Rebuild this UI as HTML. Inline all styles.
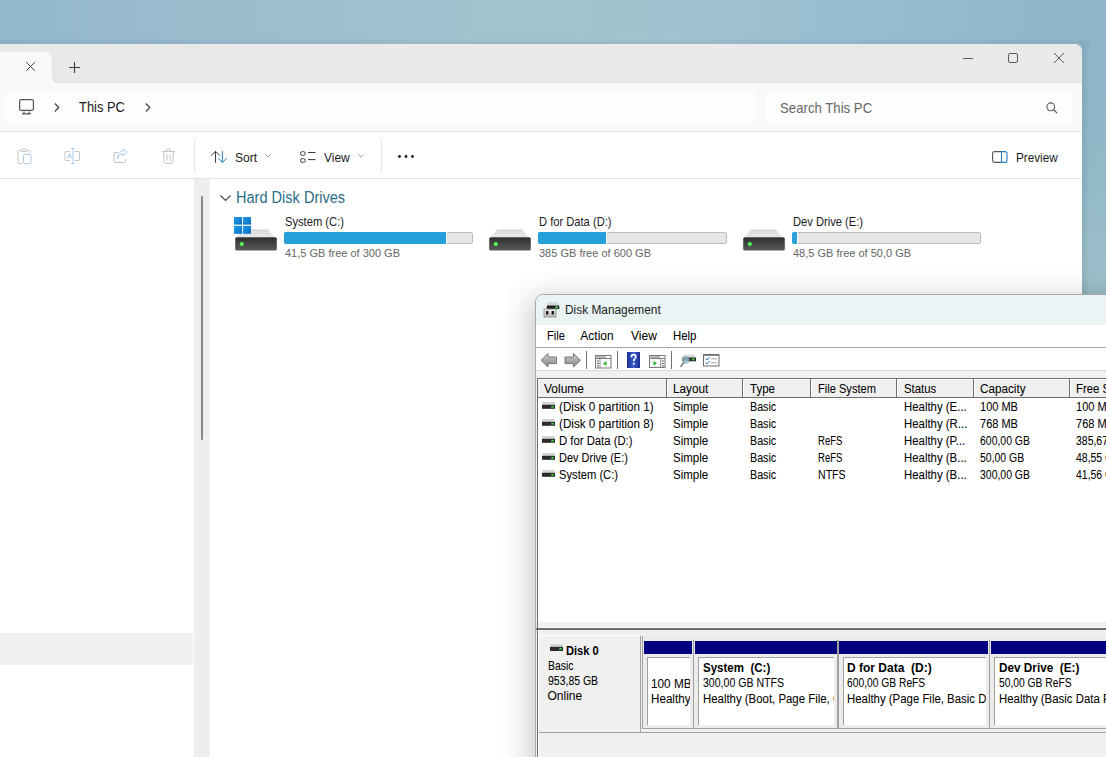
<!DOCTYPE html>
<html><head><meta charset="utf-8">
<style>
*{box-sizing:border-box;margin:0;padding:0}
html,body{width:1106px;height:757px;overflow:hidden}
body{position:relative;font-family:"Liberation Sans",sans-serif;background:linear-gradient(90deg,#93b8ca 0%,#9bbfce 25%,#a2c4cf 45%,#a0c3cf 62%,#96bccf 80%,#8fb5c9 100%);}
.a{position:absolute}
.t{position:absolute;white-space:pre;line-height:1;transform-origin:0 0}
svg{position:absolute;overflow:visible}
#exp{left:-20px;top:44px;width:1102px;height:720px;background:#fff;border-top-right-radius:8px;overflow:hidden}
.dmt{font-size:12px;color:#000;-webkit-text-stroke:0.05px #000}
</style></head><body>

<div class="a" style="left:0;top:38px;width:1090px;height:6px;background:linear-gradient(180deg,rgba(60,90,100,0),rgba(60,90,100,.12))"></div>
<div class="a" style="left:1082px;top:44px;width:24px;height:256px;background:linear-gradient(180deg,#8fb5c9 0%,#93b8c7 50%,#9dc1cb 100%)"></div>
<div class="a" style="left:1082px;top:44px;width:8px;height:260px;background:linear-gradient(90deg,rgba(60,90,100,.14),rgba(60,90,100,0))"></div>
<!-- EXPLORER -->
<div id="exp" class="a"></div>
<!-- tab row -->
<div class="a" style="left:0;top:44px;width:1082px;height:38px;background:#e9e9e9;border-top-right-radius:8px"></div>
<div class="a" style="left:0;top:52px;width:52px;height:31px;background:#f9f9f9;border-top-right-radius:8px"></div>
<div class="a" style="left:52px;top:75px;width:8px;height:8px;background:#f9f9f9"></div>
<div class="a" style="left:52px;top:60px;width:1030px;height:23px;background:#e9e9e9;border-bottom-left-radius:6px;border-bottom:1px solid #dfdfdf;border-left:1px solid #e2e2e2"></div>
<svg style="left:26px;top:62px" width="9" height="9"><path d="M0.3 0.3L8.7 8.7M8.7 0.3L0.3 8.7" stroke="#3a3a3a" stroke-width="1"/></svg>
<svg style="left:69px;top:62px" width="11" height="11"><path d="M5.5 0V11M0 5.5H11" stroke="#3a3a3a" stroke-width="1.1"/></svg>
<!-- window controls -->
<svg style="left:963px;top:58px" width="10" height="1"><path d="M0 0.5H10" stroke="#5a5a5a" stroke-width="1"/></svg>
<svg style="left:1008px;top:53px" width="10" height="10"><rect x="0.5" y="0.5" width="9" height="9" rx="1.5" fill="none" stroke="#5a5a5a" stroke-width="1"/></svg>
<svg style="left:1054px;top:53px" width="10" height="10"><path d="M0 0L10 10M10 0L0 10" stroke="#5a5a5a" stroke-width="1"/></svg>

<!-- address row -->
<div class="a" style="left:0;top:83px;width:1082px;height:48.5px;background:#f9f9f9;border-bottom:1px solid #e1e1e1"></div>
<div class="a" style="left:5px;top:90px;width:751px;height:34px;background:#fdfdfd;border-radius:4px"></div>
<svg style="left:19px;top:99px" width="15" height="16"><rect x="0.6" y="0.6" width="13.8" height="10.8" rx="1.5" fill="none" stroke="#555" stroke-width="1.2"/><path d="M5 12.5V14.5M10 12.5V14.5M3 14.8H12" stroke="#555" stroke-width="1.2"/></svg>
<svg style="left:54px;top:103px" width="6" height="9"><path d="M0.8 0.5L4.8 4.5L0.8 8.5" fill="none" stroke="#3a3a3a" stroke-width="1.1"/></svg>
<div class="t" style="left:79.4px;top:100.1px;font-size:14.8px;color:#1b1b1b;transform:scaleX(0.872)">This PC</div>
<svg style="left:145px;top:103px" width="6" height="9"><path d="M0.8 0.5L4.8 4.5L0.8 8.5" fill="none" stroke="#3a3a3a" stroke-width="1.1"/></svg>
<div class="a" style="left:766px;top:91px;width:305px;height:33px;background:#fdfdfd;border-radius:4px"></div>
<div class="t" style="left:780px;top:99.9px;font-size:15px;color:#666;transform:scaleX(0.88)">Search This PC</div>
<svg style="left:1046px;top:102px" width="12" height="12"><circle cx="4.8" cy="4.8" r="3.9" fill="none" stroke="#5a5a5a" stroke-width="1.1"/><path d="M7.6 7.6L11 11" stroke="#5a5a5a" stroke-width="1.2"/></svg>

<!-- toolbar -->
<div class="a" style="left:0;top:131.5px;width:1082px;height:47.5px;background:#fff;border-bottom:1px solid #e1e1e1"></div>
<!-- disabled icons -->
<svg style="left:17px;top:148px" width="15" height="16"><path d="M3.5 2.5H2.2C1.5 2.5 1 3 1 3.7V14.3C1 15 1.5 15.5 2.2 15.5H5" fill="none" stroke="#c4c4c4" stroke-width="1"/><rect x="4" y="1" width="6" height="2.5" rx="1" fill="none" stroke="#c4c4c4" stroke-width="1"/><path d="M10.5 2.5H11.8C12.5 2.5 13 3 13 3.7V5.5" fill="none" stroke="#c4c4c4" stroke-width="1"/><rect x="6.5" y="6.5" width="7.5" height="9" rx="1.2" fill="none" stroke="#a9cdea" stroke-width="1"/></svg>
<svg style="left:64px;top:148px" width="17" height="16"><path d="M6 3.5H2C1.4 3.5 1 3.9 1 4.5V11.5C1 12.1 1.4 12.5 2 12.5H6M10.5 3.5H14.5C15.1 3.5 15.5 3.9 15.5 4.5V11.5C15.5 12.1 15.1 12.5 14.5 12.5H10.5" fill="none" stroke="#c4c4c4" stroke-width="1"/><path d="M3.5 10.5L5.5 5L7.5 10.5M4.2 8.7H6.8" fill="none" stroke="#a9cdea" stroke-width="1"/><path d="M9 0.5V15.5M7.2 0.5H10.8M7.2 15.5H10.8" fill="none" stroke="#a9cdea" stroke-width="1"/></svg>
<svg style="left:113px;top:148px" width="15" height="16"><path d="M5 4.5H2C1.4 4.5 1 4.9 1 5.5V13.5C1 14.1 1.4 14.5 2 14.5H11.5C12.1 14.5 12.5 14.1 12.5 13.5V11.5" fill="none" stroke="#c4c4c4" stroke-width="1"/><path d="M4.5 11C5 7.5 7.5 5.8 10 5.8V8L14 4.2L10 0.8V2.9C6.5 3 4.5 6.5 4.5 11Z" fill="none" stroke="#a9cdea" stroke-width="1"/></svg>
<svg style="left:161px;top:148px" width="15" height="16"><path d="M1 3.5H14M5.5 3.5V2C5.5 1.4 5.9 1 6.5 1H8.5C9.1 1 9.5 1.4 9.5 2V3.5M2.5 3.5L3.3 14C3.4 14.8 3.9 15.3 4.6 15.3H10.4C11.1 15.3 11.6 14.8 11.7 14L12.5 3.5M6 6.5V12.5M9 6.5V12.5" fill="none" stroke="#c4c4c4" stroke-width="1"/></svg>
<div class="a" style="left:194px;top:139px;width:1px;height:33px;background:#e5e5e5"></div>
<!-- sort -->
<svg style="left:211px;top:151px" width="17" height="13"><path d="M4.5 11.8V0.3M0.2 4.6L4.5 0.3L8.8 4.6" fill="none" stroke="#3a3a3a" stroke-width="1"/><path d="M11.4 0V11.5M7.1 7.2L11.4 11.5L15.7 7.2" fill="none" stroke="#2a7ec4" stroke-width="1"/></svg>
<div class="t" style="left:235.4px;top:150.8px;font-size:13.3px;color:#1b1b1b;transform:scaleX(0.91)">Sort</div>
<svg style="left:265px;top:154px" width="6" height="4"><path d="M0.3 0.3L3 3L5.7 0.3" fill="none" stroke="#9a9a9a" stroke-width="0.9"/></svg>
<!-- view -->
<svg style="left:300px;top:151px" width="17" height="12"><rect x="0.5" y="0.6" width="4.8" height="3.8" rx="1.9" fill="none" stroke="#3a3a3a" stroke-width="1"/><rect x="0.5" y="7.6" width="4.8" height="3.8" rx="1.9" fill="none" stroke="#3a3a3a" stroke-width="1"/><path d="M8 1.5H15.5M8 8.6H15.5" stroke="#3a3a3a" stroke-width="1"/></svg>
<div class="t" style="left:324.3px;top:150.8px;font-size:13.3px;color:#1b1b1b;transform:scaleX(0.9)">View</div>
<svg style="left:358px;top:154px" width="6" height="4"><path d="M0.3 0.3L3 3L5.7 0.3" fill="none" stroke="#9a9a9a" stroke-width="0.9"/></svg>
<div class="a" style="left:381px;top:139px;width:1px;height:33px;background:#e5e5e5"></div>
<svg style="left:398px;top:155px" width="16" height="3"><circle cx="1.5" cy="1.5" r="1.4" fill="#1b1b1b"/><circle cx="8" cy="1.5" r="1.4" fill="#1b1b1b"/><circle cx="14.5" cy="1.5" r="1.4" fill="#1b1b1b"/></svg>
<!-- preview -->
<svg style="left:992px;top:151px" width="16" height="12"><path d="M9.5 0.6H2.5C1.5 0.6 0.6 1.5 0.6 2.5V9.5C0.6 10.5 1.5 11.4 2.5 11.4H9.5" fill="none" stroke="#555" stroke-width="1.1"/><path d="M9.5 0.6H13C14.1 0.6 15 1.5 15 2.6V9.4C15 10.5 14.1 11.4 13 11.4H9.5V0.6Z" fill="none" stroke="#2a7ec4" stroke-width="1.1"/></svg>
<div class="t" style="left:1016.4px;top:150.5px;font-size:13.3px;color:#1b1b1b;transform:scaleX(0.88)">Preview</div>

<!-- content -->
<div class="a" style="left:0;top:633px;width:193px;height:32px;background:#f0f0f0"></div>
<div class="a" style="left:194px;top:179px;width:16px;height:600px;background:#eeeeee"></div>
<div class="a" style="left:201px;top:196px;width:2px;height:244px;background:#858585;border-radius:1px"></div>

<svg style="left:220px;top:195px" width="11" height="6"><path d="M0.5 0.5L5.5 5.5L10.5 0.5" fill="none" stroke="#444" stroke-width="1.1"/></svg>
<div class="t" style="left:235.8px;top:189.7px;font-size:15.6px;color:#2a6d86;transform:scaleX(0.933)">Hard Disk Drives</div>


<svg style="left:234px;top:228px" width="45" height="24"><defs><linearGradient id="tf235" x1="0" y1="0" x2="0" y2="1"><stop offset="0" stop-color="#d9d9d9"/><stop offset="1" stop-color="#e9e9e9"/></linearGradient><linearGradient id="bd235" x1="0" y1="0" x2="0" y2="1"><stop offset="0" stop-color="#2e2e2e"/><stop offset="1" stop-color="#5a5a5a"/></linearGradient></defs><path d="M9.4 1.3H33.7L40.7 9.3H2.4Z" fill="url(#tf235)"/><rect x="1.2" y="9.3" width="41.6" height="13.2" rx="1.5" fill="url(#bd235)"/><circle cx="7.8" cy="16" r="2.2" fill="#3ddc3d"/><circle cx="7.8" cy="16" r="1.1" fill="#8ff08f"/></svg>
<div class="t" style="left:285px;top:216.3px;font-size:12.4px;color:#1b1b1b;transform:scaleX(0.9)">System (C:)</div>
<div class="a" style="left:284px;top:232.3px;width:189px;height:12.2px;background:#e6e6e6;border:1px solid #bcbcbc;border-radius:2px"></div>
<div class="a" style="left:284px;top:232.3px;width:163px;height:12.2px;background:#26a0da;border-radius:2px 0 0 2px;border-right:1px solid #f4fbff"></div>
<div class="t" style="left:285px;top:247.7px;font-size:11.8px;color:#666;transform:scaleX(0.933)">41,5 GB free of 300 GB</div>
<svg style="left:488px;top:228px" width="45" height="24"><defs><linearGradient id="tf489" x1="0" y1="0" x2="0" y2="1"><stop offset="0" stop-color="#d9d9d9"/><stop offset="1" stop-color="#e9e9e9"/></linearGradient><linearGradient id="bd489" x1="0" y1="0" x2="0" y2="1"><stop offset="0" stop-color="#2e2e2e"/><stop offset="1" stop-color="#5a5a5a"/></linearGradient></defs><path d="M9.4 1.3H33.7L40.7 9.3H2.4Z" fill="url(#tf489)"/><rect x="1.2" y="9.3" width="41.6" height="13.2" rx="1.5" fill="url(#bd489)"/><circle cx="7.8" cy="16" r="2.2" fill="#3ddc3d"/><circle cx="7.8" cy="16" r="1.1" fill="#8ff08f"/></svg>
<div class="t" style="left:539px;top:216.3px;font-size:12.4px;color:#1b1b1b;transform:scaleX(0.9)">D for Data (D:)</div>
<div class="a" style="left:538px;top:232.3px;width:189px;height:12.2px;background:#e6e6e6;border:1px solid #bcbcbc;border-radius:2px"></div>
<div class="a" style="left:538px;top:232.3px;width:69px;height:12.2px;background:#26a0da;border-radius:2px 0 0 2px;border-right:1px solid #f4fbff"></div>
<div class="t" style="left:539px;top:247.7px;font-size:11.8px;color:#666;transform:scaleX(0.933)">385 GB free of 600 GB</div>
<svg style="left:742px;top:228px" width="45" height="24"><defs><linearGradient id="tf743" x1="0" y1="0" x2="0" y2="1"><stop offset="0" stop-color="#d9d9d9"/><stop offset="1" stop-color="#e9e9e9"/></linearGradient><linearGradient id="bd743" x1="0" y1="0" x2="0" y2="1"><stop offset="0" stop-color="#2e2e2e"/><stop offset="1" stop-color="#5a5a5a"/></linearGradient></defs><path d="M9.4 1.3H33.7L40.7 9.3H2.4Z" fill="url(#tf743)"/><rect x="1.2" y="9.3" width="41.6" height="13.2" rx="1.5" fill="url(#bd743)"/><circle cx="7.8" cy="16" r="2.2" fill="#3ddc3d"/><circle cx="7.8" cy="16" r="1.1" fill="#8ff08f"/></svg>
<div class="t" style="left:793px;top:216.3px;font-size:12.4px;color:#1b1b1b;transform:scaleX(0.9)">Dev Drive (E:)</div>
<div class="a" style="left:792px;top:232.3px;width:189px;height:12.2px;background:#e6e6e6;border:1px solid #bcbcbc;border-radius:2px"></div>
<div class="a" style="left:792px;top:232.3px;width:6px;height:12.2px;background:#26a0da;border-radius:2px 0 0 2px;border-right:1px solid #f4fbff"></div>
<div class="t" style="left:793px;top:247.7px;font-size:11.8px;color:#666;transform:scaleX(0.933)">48,5 GB free of 50,0 GB</div>
<svg style="left:234px;top:217px" width="17" height="17"><defs><linearGradient id="wl" x1="0" y1="0" x2="1" y2="1"><stop offset="0" stop-color="#1c9be8"/><stop offset="1" stop-color="#0c6fc6"/></linearGradient></defs><rect x="0" y="0" width="8" height="7.6" fill="url(#wl)"/><rect x="9" y="0" width="8" height="7.6" fill="url(#wl)"/><rect x="0" y="8.8" width="8" height="8" fill="url(#wl)"/><rect x="9" y="8.8" width="8" height="8" fill="url(#wl)"/></svg>
<div class="a" style="left:535px;top:295px;width:700px;height:520px;border-top-left-radius:8px;box-shadow:-4px 4px 30px rgba(0,0,0,0.24)"></div>
<div class="a" style="left:535px;top:294px;width:700px;height:520px;background:#f0f0f0;border:1px solid #a8a8a8;border-top-left-radius:8px;overflow:hidden">
<div class="a" style="left:0;top:0;width:700px;height:30px;background:#eaf4f5"></div>
<div class="a" style="left:0;top:30px;width:700px;height:23px;background:#fff;border-bottom:1px solid #a6a6a6"></div>
<div class="a" style="left:0;top:53px;width:700px;height:22px;background:#fff"></div>
</div>
<svg style="left:543px;top:301px" width="18" height="17"><defs><linearGradient id="tb" x1="0" y1="0" x2="0" y2="1"><stop offset="0" stop-color="#f4f4f4"/><stop offset="1" stop-color="#b9b9b9"/></linearGradient></defs><path d="M5 1.2H15L16 4.6H4Z" fill="#d5d5dc"/><rect x="3.8" y="4.5" width="12.5" height="3.6" rx="0.6" fill="#1f1f1f"/><circle cx="13.6" cy="6.3" r="1.3" fill="#47d447"/><rect x="1" y="8" width="12" height="8" fill="url(#tb)" stroke="#8a8a8a" stroke-width="0.8"/><rect x="3" y="10" width="2.4" height="3.5" fill="#1a1a1a"/><rect x="8.6" y="10" width="2.4" height="3.5" fill="#1a1a1a"/></svg>
<div class="t " style="left:565.3px;top:304px;transform:scaleX(0.99);font-size:12px;color:#1b1b1b">Disk Management</div>
<div class="t dmt" style="left:546.5px;top:329.5px;transform:scaleX(0.92);">File</div>
<div class="t dmt" style="left:580.3px;top:329.5px;transform:scaleX(1.0);">Action</div>
<div class="t dmt" style="left:631px;top:329.5px;transform:scaleX(1.0);">View</div>
<div class="t dmt" style="left:672.5px;top:329.5px;transform:scaleX(0.95);">Help</div>
<svg style="left:540px;top:352.5px" width="18" height="16"><defs><linearGradient id="ar" x1="0" y1="0" x2="0" y2="1"><stop offset="0" stop-color="#d8d8d8"/><stop offset="0.5" stop-color="#a8a8a8"/><stop offset="1" stop-color="#8a8a8a"/></linearGradient></defs><path d="M1 7.3L8 0.6V4H16.5V10.6H8V14Z" fill="url(#ar)" stroke="#777" stroke-width="1" stroke-linejoin="round"/></svg>
<svg style="left:563.5px;top:352.5px" width="18" height="16"><path d="M16.5 7.3L9.5 0.6V4H1V10.6H9.5V14Z" fill="url(#ar)" stroke="#777" stroke-width="1" stroke-linejoin="round"/></svg>
<div class="a" style="left:586px;top:351px;width:1px;height:18px;background:#707070"></div>
<svg style="left:595px;top:354.5px" width="17" height="14"><rect x="0.5" y="0.5" width="15.5" height="12.5" fill="#fafafa" stroke="#7a7a7a" stroke-width="1"/><path d="M0.5 3.5H16" stroke="#7a7a7a"/><rect x="1.5" y="1.3" width="9.5" height="1.4" fill="#9a9a9a"/><path d="M5 4V13" stroke="#9a9a9a"/><path d="M2 6H4M2 8.5H4M2 11H4" stroke="#555" stroke-width="1"/><path d="M11.5 6L8 8.5L11.5 11Z" fill="#2fb52f"/></svg>
<div class="a" style="left:617px;top:351px;width:1px;height:18px;background:#707070"></div>
<svg style="left:627px;top:352px" width="13" height="16"><defs><linearGradient id="hp" x1="0" y1="0" x2="1" y2="0"><stop offset="0" stop-color="#1b2e8f"/><stop offset="0.5" stop-color="#3b5fcf"/><stop offset="1" stop-color="#1b2e8f"/></linearGradient></defs><rect x="0" y="0" width="13" height="16" fill="url(#hp)"/><path d="M4.3 5.2C4.3 3.4 5.3 2.6 6.6 2.6C8 2.6 8.9 3.5 8.9 4.8C8.9 6.6 6.7 6.9 6.7 9.2" fill="none" stroke="#fff" stroke-width="1.6"/><rect x="5.9" y="10.9" width="1.7" height="1.8" fill="#fff"/></svg>
<svg style="left:649px;top:355px" width="17" height="13"><rect x="0.5" y="0.5" width="15.5" height="12" fill="#fafafa" stroke="#7a7a7a" stroke-width="1"/><path d="M0.5 3.5H16" stroke="#7a7a7a"/><rect x="1.5" y="1.3" width="9.5" height="1.4" fill="#9a9a9a"/><path d="M11.5 4V12.5" stroke="#9a9a9a"/><path d="M12.8 6H14.8M12.8 8.5H14.8M12.8 11H14.8" stroke="#555" stroke-width="1"/><path d="M4.5 5.8L8 8.3L4.5 10.8Z" fill="#2fb52f"/></svg>
<div class="a" style="left:671px;top:351px;width:1px;height:18px;background:#707070"></div>
<svg style="left:679.5px;top:354px" width="17" height="14"><path d="M3.5 0.8H14.5L15.5 3.5H2.5Z" fill="#d8d8d8"/><rect x="2.5" y="3.5" width="13.5" height="3.8" fill="#2a2a2a"/><rect x="12" y="4.5" width="2.6" height="1.8" fill="#39d039"/><circle cx="6" cy="6" r="3.2" fill="#a9cde0" fill-opacity="0.75" stroke="#6f8f9f" stroke-width="0.8"/><path d="M3.8 8.4L0.5 13" stroke="#555" stroke-width="1.2"/></svg>
<svg style="left:703px;top:354px" width="17" height="13"><rect x="0.5" y="0.5" width="15.5" height="11.5" fill="#fff" stroke="#6a6a6a" stroke-width="1"/><path d="M0.5 1.5H16" stroke="#8a8a8a" stroke-width="1"/><path d="M2.5 4.5L4 6L6.5 3M2.5 8.5L4 10L6.5 7" fill="none" stroke="#2a7ec4" stroke-width="1"/><path d="M8 4.8H14M8 8.8H14" stroke="#a0a0a0" stroke-width="1"/></svg>
<div class="a" style="left:536px;top:370px;width:600px;height:8px;background:#f0f0f0;border-top:1px solid #dadada"></div>
<div class="a" style="left:537px;top:377.5px;width:600px;height:252px;background:#fff;border-left:1px solid #6e6e6e;border-top:1.5px solid #6e6e6e"></div>
<div class="a" style="left:538px;top:379px;width:600px;height:18.5px;background:#efefef;border-top:1px solid #fff;border-bottom:1.2px solid #6e6e6e"></div>
<div class="a" style="left:665.5px;top:379px;width:1px;height:18px;background:#6e6e6e"></div><div class="a" style="left:666.5px;top:379px;width:1px;height:18px;background:#fff"></div>
<div class="a" style="left:742.0px;top:379px;width:1px;height:18px;background:#6e6e6e"></div><div class="a" style="left:743.0px;top:379px;width:1px;height:18px;background:#fff"></div>
<div class="a" style="left:810.0px;top:379px;width:1px;height:18px;background:#6e6e6e"></div><div class="a" style="left:811.0px;top:379px;width:1px;height:18px;background:#fff"></div>
<div class="a" style="left:896.0px;top:379px;width:1px;height:18px;background:#6e6e6e"></div><div class="a" style="left:897.0px;top:379px;width:1px;height:18px;background:#fff"></div>
<div class="a" style="left:972.8px;top:379px;width:1px;height:18px;background:#6e6e6e"></div><div class="a" style="left:973.8px;top:379px;width:1px;height:18px;background:#fff"></div>
<div class="a" style="left:1069.2px;top:379px;width:1px;height:18px;background:#6e6e6e"></div><div class="a" style="left:1070.2px;top:379px;width:1px;height:18px;background:#fff"></div>
<div class="t dmt" style="left:544px;top:383px;transform:scaleX(1.0);">Volume</div>
<div class="t dmt" style="left:673.3px;top:383px;transform:scaleX(0.98);">Layout</div>
<div class="t dmt" style="left:750px;top:383px;transform:scaleX(0.96);">Type</div>
<div class="t dmt" style="left:817.7px;top:383px;transform:scaleX(0.925);">File System</div>
<div class="t dmt" style="left:903.6px;top:383px;transform:scaleX(0.95);">Status</div>
<div class="t dmt" style="left:980px;top:383px;transform:scaleX(0.976);">Capacity</div>
<div class="t dmt" style="left:1076px;top:383px;transform:scaleX(0.95);">Free S</div>
<svg style="left:541.5px;top:402.3px" width="13" height="7"><rect x="0.3" y="0" width="12.4" height="3" rx="0.6" fill="#d4d4d4"/><rect x="0" y="2.8" width="13" height="4" fill="#2b2b2b"/><rect x="9.3" y="3.9" width="2.4" height="1.8" fill="#3ad63a"/></svg>
<div class="t dmt" style="left:558.5px;top:400.9px;transform:scaleX(0.972);">(Disk 0 partition 1)</div>
<div class="t dmt" style="left:673.3px;top:400.9px;transform:scaleX(0.96);">Simple</div>
<div class="t dmt" style="left:750px;top:400.9px;transform:scaleX(0.894);">Basic</div>
<div class="t dmt" style="left:903.6px;top:400.9px;transform:scaleX(0.95);">Healthy (E...</div>
<div class="t dmt" style="left:980px;top:400.9px;transform:scaleX(0.918);">100 MB</div>
<div class="t dmt" style="left:1076px;top:400.9px;transform:scaleX(0.918);">100 MB</div>
<svg style="left:541.5px;top:419.3px" width="13" height="7"><rect x="0.3" y="0" width="12.4" height="3" rx="0.6" fill="#d4d4d4"/><rect x="0" y="2.8" width="13" height="4" fill="#2b2b2b"/><rect x="9.3" y="3.9" width="2.4" height="1.8" fill="#3ad63a"/></svg>
<div class="t dmt" style="left:558.5px;top:417.9px;transform:scaleX(0.972);">(Disk 0 partition 8)</div>
<div class="t dmt" style="left:673.3px;top:417.9px;transform:scaleX(0.96);">Simple</div>
<div class="t dmt" style="left:750px;top:417.9px;transform:scaleX(0.894);">Basic</div>
<div class="t dmt" style="left:903.6px;top:417.9px;transform:scaleX(0.95);">Healthy (R...</div>
<div class="t dmt" style="left:980px;top:417.9px;transform:scaleX(0.918);">768 MB</div>
<div class="t dmt" style="left:1076px;top:417.9px;transform:scaleX(0.918);">768 MB</div>
<svg style="left:541.5px;top:436.3px" width="13" height="7"><rect x="0.3" y="0" width="12.4" height="3" rx="0.6" fill="#d4d4d4"/><rect x="0" y="2.8" width="13" height="4" fill="#2b2b2b"/><rect x="9.3" y="3.9" width="2.4" height="1.8" fill="#3ad63a"/></svg>
<div class="t dmt" style="left:558.5px;top:434.9px;transform:scaleX(0.942);">D for Data (D:)</div>
<div class="t dmt" style="left:673.3px;top:434.9px;transform:scaleX(0.96);">Simple</div>
<div class="t dmt" style="left:750px;top:434.9px;transform:scaleX(0.894);">Basic</div>
<div class="t dmt" style="left:817.7px;top:434.9px;transform:scaleX(0.795);">ReFS</div>
<div class="t dmt" style="left:903.6px;top:434.9px;transform:scaleX(0.95);">Healthy (P...</div>
<div class="t dmt" style="left:980px;top:434.9px;transform:scaleX(0.871);">600,00 GB</div>
<div class="t dmt" style="left:1076px;top:434.9px;transform:scaleX(0.871);">385,67 GB</div>
<svg style="left:541.5px;top:453.3px" width="13" height="7"><rect x="0.3" y="0" width="12.4" height="3" rx="0.6" fill="#d4d4d4"/><rect x="0" y="2.8" width="13" height="4" fill="#2b2b2b"/><rect x="9.3" y="3.9" width="2.4" height="1.8" fill="#3ad63a"/></svg>
<div class="t dmt" style="left:558.5px;top:451.9px;transform:scaleX(0.914);">Dev Drive (E:)</div>
<div class="t dmt" style="left:673.3px;top:451.9px;transform:scaleX(0.96);">Simple</div>
<div class="t dmt" style="left:750px;top:451.9px;transform:scaleX(0.894);">Basic</div>
<div class="t dmt" style="left:817.7px;top:451.9px;transform:scaleX(0.795);">ReFS</div>
<div class="t dmt" style="left:903.6px;top:451.9px;transform:scaleX(0.95);">Healthy (B...</div>
<div class="t dmt" style="left:980px;top:451.9px;transform:scaleX(0.871);">50,00 GB</div>
<div class="t dmt" style="left:1076px;top:451.9px;transform:scaleX(0.871);">48,55 GB</div>
<svg style="left:541.5px;top:470.3px" width="13" height="7"><rect x="0.3" y="0" width="12.4" height="3" rx="0.6" fill="#d4d4d4"/><rect x="0" y="2.8" width="13" height="4" fill="#2b2b2b"/><rect x="9.3" y="3.9" width="2.4" height="1.8" fill="#3ad63a"/></svg>
<div class="t dmt" style="left:558.5px;top:468.9px;transform:scaleX(0.932);">System (C:)</div>
<div class="t dmt" style="left:673.3px;top:468.9px;transform:scaleX(0.96);">Simple</div>
<div class="t dmt" style="left:750px;top:468.9px;transform:scaleX(0.894);">Basic</div>
<div class="t dmt" style="left:817.7px;top:468.9px;transform:scaleX(0.88);">NTFS</div>
<div class="t dmt" style="left:903.6px;top:468.9px;transform:scaleX(0.95);">Healthy (B...</div>
<div class="t dmt" style="left:980px;top:468.9px;transform:scaleX(0.871);">300,00 GB</div>
<div class="t dmt" style="left:1076px;top:468.9px;transform:scaleX(0.871);">41,56 GB</div>
<div class="a" style="left:538px;top:622px;width:600px;height:6px;background:#f0f0f0;border-bottom:1px solid #fff"></div>
<div class="a" style="left:536px;top:628px;width:600px;height:2px;background:#6e6e6e"></div>
<div class="a" style="left:538px;top:630px;width:600px;height:130px;background:#f0f0f0"></div>
<div class="a" style="left:538px;top:635px;width:103px;height:98px;background:#f0f0f0;border-top:1px solid #fff;border-right:1px solid #a0a0a0;border-bottom:1px solid #a0a0a0"></div>
<div class="a" style="left:538px;top:732px;width:600px;height:1px;background:#a0a0a0"></div>
<div class="a" style="left:536.5px;top:628px;width:1.5px;height:140px;background:#6e6e6e"></div>
<div class="a" style="left:538px;top:630px;width:1px;height:140px;background:#fff"></div>
<svg style="left:549.5px;top:644px" width="13" height="8"><rect x="0.3" y="0" width="12.4" height="3" rx="0.6" fill="#d4d4d4"/><rect x="0" y="2.8" width="13" height="4.2" fill="#2b2b2b"/><rect x="9.3" y="3.9" width="2.4" height="1.8" fill="#3ad63a"/></svg>
<div class="t " style="left:565.5px;top:644.8px;transform:scaleX(0.927);font-size:12px;font-weight:bold;color:#000">Disk 0</div>
<div class="t dmt" style="left:547.5px;top:659.6px;transform:scaleX(0.87);">Basic</div>
<div class="t dmt" style="left:547.5px;top:674.6px;transform:scaleX(0.873);">953,85 GB</div>
<div class="t dmt" style="left:547.5px;top:689.6px;transform:scaleX(1.0);">Online</div>
<div class="a" style="left:641.5px;top:636px;width:500px;height:93px;background:#ececec;border-left:1px solid #a0a0a0;border-bottom:1px solid #a0a0a0"></div>
<div class="a" style="left:643.5px;top:641px;width:48.5px;height:13px;background:#000080"></div>
<div class="a" style="left:646.5px;top:657px;width:43.0px;height:67.5px;background:#fff;border-left:1px solid #a0a0a0;border-top:1px solid #a0a0a0;overflow:hidden">
<div class="t dmt" style="left:3.5px;top:19.5px;transform:scaleX(0.98);">100 MB</div><div class="t dmt" style="left:3.5px;top:34.5px;transform:scaleX(0.97);">Healthy (EFI System Partition)</div>
</div>
<div class="a" style="left:692.5px;top:640px;width:1.5px;height:88.5px;background:#a0a0a0"></div>
<div class="a" style="left:694.5px;top:641px;width:142.0px;height:13px;background:#000080"></div>
<div class="a" style="left:698px;top:657px;width:136.0px;height:67.5px;background:#fff;border-left:1px solid #a0a0a0;border-top:1px solid #a0a0a0;overflow:hidden">
<div class="t " style="left:3.5px;top:4.3px;transform:scaleX(0.96);font-size:12px;font-weight:bold;color:#000">System  (C:)</div><div class="t dmt" style="left:3.5px;top:19.2px;transform:scaleX(0.88);">300,00 GB NTFS</div><div class="t dmt" style="left:3.5px;top:34.6px;transform:scaleX(0.95);">Healthy (Boot, Page File, Crash Dump, Basic Data Partition)</div>
</div>
<div class="a" style="left:837.0px;top:640px;width:1.5px;height:88.5px;background:#a0a0a0"></div>
<div class="a" style="left:839.0px;top:641px;width:149.0px;height:13px;background:#000080"></div>
<div class="a" style="left:842.5px;top:657px;width:143.0px;height:67.5px;background:#fff;border-left:1px solid #a0a0a0;border-top:1px solid #a0a0a0;overflow:hidden">
<div class="t " style="left:3.5px;top:4.3px;transform:scaleX(1.0);font-size:12px;font-weight:bold;color:#000">D for Data  (D:)</div><div class="t dmt" style="left:3.5px;top:19.2px;transform:scaleX(0.856);">600,00 GB ReFS</div><div class="t dmt" style="left:3.5px;top:34.6px;transform:scaleX(0.95);">Healthy (Page File, Basic Data Partition)</div>
</div>
<div class="a" style="left:988.5px;top:640px;width:1.5px;height:88.5px;background:#a0a0a0"></div>
<div class="a" style="left:990.5px;top:641px;width:148.5px;height:13px;background:#000080"></div>
<div class="a" style="left:994px;top:657px;width:142.5px;height:67.5px;background:#fff;border-left:1px solid #a0a0a0;border-top:1px solid #a0a0a0;overflow:hidden">
<div class="t " style="left:3.5px;top:4.3px;transform:scaleX(0.98);font-size:12px;font-weight:bold;color:#000">Dev Drive  (E:)</div><div class="t dmt" style="left:3.5px;top:19.2px;transform:scaleX(0.856);">50,00 GB ReFS</div><div class="t dmt" style="left:3.5px;top:34.6px;transform:scaleX(0.95);">Healthy (Basic Data Partition)</div>
</div>
</body></html>
